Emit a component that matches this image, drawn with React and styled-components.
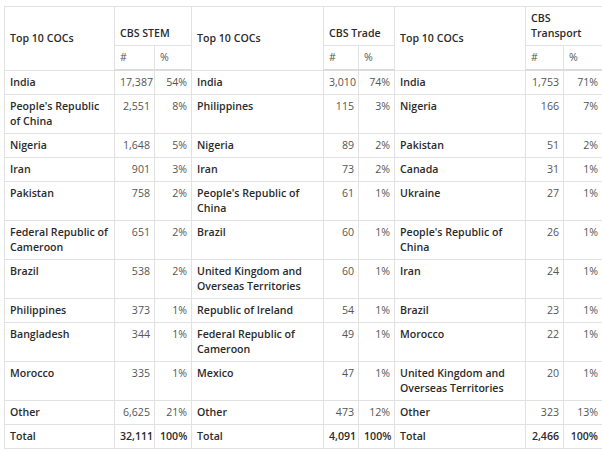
import React from "react";
import styled, { createGlobalStyle } from "styled-components";

const Global = createGlobalStyle`
  html, body { margin: 0; padding: 0; background: #fff; }
  body { font-family: "Open Sans", "Liberation Sans", sans-serif; overflow: hidden; }
`;

const Wrap = styled.div`
  padding: 6px 0 0 4px;
  width: 640px;
`;

const Table = styled.table`
  border-collapse: collapse;
  table-layout: fixed;
  width: 598px;
  font-size: 10.6px;
  line-height: 15px;
  color: #2b2b2b;
  border: 1px solid #e2e2e2;
`;

const HeadCell = styled.th`
  border: 1px solid #e2e2e2;
  padding: 4px 5px;
  text-align: left;
  font-weight: ${(p) => (p.$sub ? 400 : 600)};
  color: ${(p) => (p.$sub ? "#555" : "#2b2b2b")};
  vertical-align: ${(p) => p.$valign || "bottom"};
`;

const HeadRow = styled.tr`
  &:last-child th { border-bottom: 2px solid #dcdcdc; }
`;

const Cell = styled.td`
  border: 1px solid #e2e2e2;
  padding: 4px 4px 4px 5px;
  vertical-align: top;
  text-align: ${(p) => (p.$num ? "right" : "left")};
  font-weight: ${(p) => (p.$num && !p.$strong ? 400 : 600)};
  color: ${(p) => (p.$num && !p.$strong ? "#555" : "#2b2b2b")};
`;

const widths = [110, 40, 37, 132, 35, 36, 131, 38, 39];

const groups = [
  {
    title: "CBS STEM",
    rows: [
      ["India", "17,387", "54%"],
      ["People's Republic of China", "2,551", "8%"],
      ["Nigeria", "1,648", "5%"],
      ["Iran", "901", "3%"],
      ["Pakistan", "758", "2%"],
      ["Federal Republic of Cameroon", "651", "2%"],
      ["Brazil", "538", "2%"],
      ["Philippines", "373", "1%"],
      ["Bangladesh", "344", "1%"],
      ["Morocco", "335", "1%"],
      ["Other", "6,625", "21%"],
      ["Total", "32,111", "100%"],
    ],
  },
  {
    title: "CBS Trade",
    rows: [
      ["India", "3,010", "74%"],
      ["Philippines", "115", "3%"],
      ["Nigeria", "89", "2%"],
      ["Iran", "73", "2%"],
      ["People's Republic of China", "61", "1%"],
      ["Brazil", "60", "1%"],
      ["United Kingdom and Overseas Territories", "60", "1%"],
      ["Republic of Ireland", "54", "1%"],
      ["Federal Republic of Cameroon", "49", "1%"],
      ["Mexico", "47", "1%"],
      ["Other", "473", "12%"],
      ["Total", "4,091", "100%"],
    ],
  },
  {
    title: "CBS Transport",
    rows: [
      ["India", "1,753", "71%"],
      ["Nigeria", "166", "7%"],
      ["Pakistan", "51", "2%"],
      ["Canada", "31", "1%"],
      ["Ukraine", "27", "1%"],
      ["People's Republic of China", "26", "1%"],
      ["Iran", "24", "1%"],
      ["Brazil", "23", "1%"],
      ["Morocco", "22", "1%"],
      ["United Kingdom and Overseas Territories", "20", "1%"],
      ["Other", "323", "13%"],
      ["Total", "2,466", "100%"],
    ],
  },
];

export default function App() {
  const rowCount = groups[0].rows.length;
  return (
    <>
      <Global />
      <Wrap>
        <Table>
          <colgroup>
            {widths.map((w, i) => (
              <col key={i} style={{ width: w }} />
            ))}
          </colgroup>
          <thead>
            <HeadRow>
              {groups.map((g) => (
                <React.Fragment key={g.title}>
                  <HeadCell rowSpan={2} $valign="middle">
                    Top 10 COCs
                  </HeadCell>
                  <HeadCell colSpan={2}>{g.title}</HeadCell>
                </React.Fragment>
              ))}
            </HeadRow>
            <HeadRow>
              {groups.map((g) => (
                <React.Fragment key={g.title}>
                  <HeadCell $sub>#</HeadCell>
                  <HeadCell $sub>%</HeadCell>
                </React.Fragment>
              ))}
            </HeadRow>
          </thead>
          <tbody>
            {Array.from({ length: rowCount }).map((_, r) => {
              const strong = r === rowCount - 1;
              return (
                <tr key={r}>
                  {groups.map((g) => {
                    const [name, n, pct] = g.rows[r];
                    return (
                      <React.Fragment key={g.title}>
                        <Cell>{name}</Cell>
                        <Cell $num $strong={strong}>{n}</Cell>
                        <Cell $num $strong={strong}>{pct}</Cell>
                      </React.Fragment>
                    );
                  })}
                </tr>
              );
            })}
          </tbody>
        </Table>
      </Wrap>
    </>
  );
}
